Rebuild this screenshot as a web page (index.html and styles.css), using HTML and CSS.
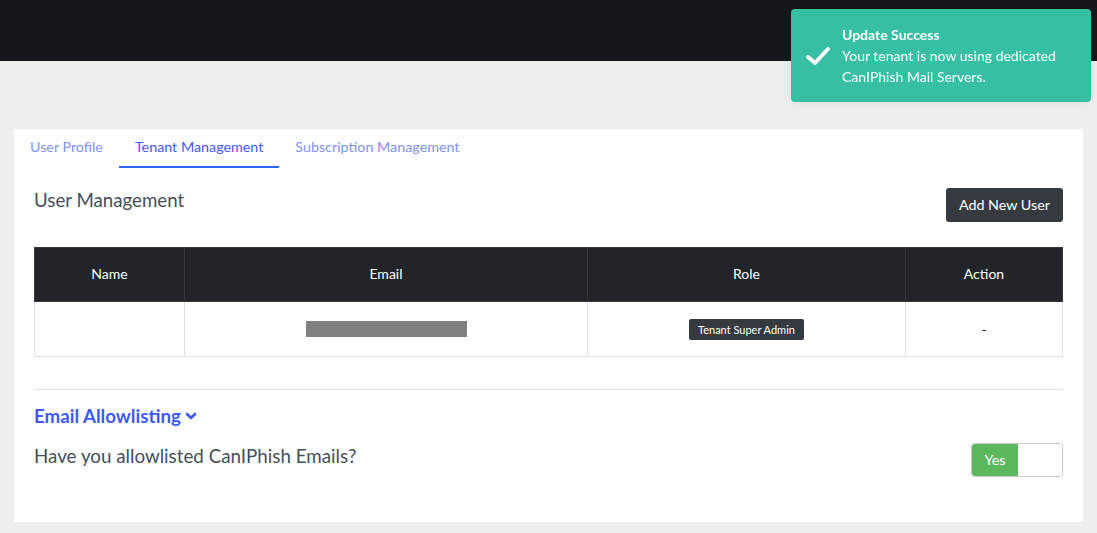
FILE: index.html
```html
<!DOCTYPE html>
<html lang="en">
<head>
    <meta charset="utf-8">
    <meta name="viewport" content="width=device-width, initial-scale=1.0">
    <title>Tenant Management</title>
<link rel="stylesheet" href="styles.css">
</head>
<body>
<div id="wrap">
    <div class="topbar"></div>
    <div id="container">
        <div class="card">
            <ul class="tabs">
                <li><a href="#none" class="tab">User Profile</a></li>
                <li><a href="#none" class="tab on">Tenant Management</a></li>
                <li><a href="#none" class="tab">Subscription Management</a></li>
            </ul>
            <div class="cardBody">
                <div class="headRow">
                    <h4 class="title">User Management</h4>
                    <a href="#none" class="btnDark">Add New User</a>
                </div>
                <table class="userTable">
                    <thead>
                        <tr>
                            <th class="colName">Name</th>
                            <th class="colEmail">Email</th>
                            <th class="colRole">Role</th>
                            <th>Action</th>
                        </tr>
                    </thead>
                    <tbody>
                        <tr>
                            <td></td>
                            <td><span class="mask"></span></td>
                            <td><span class="badge">Tenant Super Admin</span></td>
                            <td>-</td>
                        </tr>
                    </tbody>
                </table>
                <hr class="line">
                <a href="#none" class="allowTitle">Email Allowlisting
                    <svg width="12" height="12" viewBox="0 0 12 12"><path d="M2 4l4 4 4-4" fill="none" stroke="currentColor" stroke-width="2.6" stroke-linecap="round" stroke-linejoin="round"/></svg>
                </a>
                <div class="allowRow">
                    <p class="question">Have you allowlisted CanIPhish Emails?</p>
                    <div class="toggle">
                        <span class="yes">Yes</span>
                        <span class="off"></span>
                    </div>
                </div>
            </div>
        </div>
    </div>
</div>

<!-- toast -->
<div class="toast">
    <svg class="check" width="26" height="22" viewBox="0 0 26 22"><path d="M3 12l7 6L23 4" fill="none" stroke="#fff" stroke-width="4" stroke-linecap="round" stroke-linejoin="round"/></svg>
    <div class="toastTxt">
        <strong>Update Success</strong>
        <p>Your tenant is now using dedicated CanIPhish Mail Servers.</p>
    </div>
</div>
</body>
</html>
```

FILE: styles.css
```css
*{padding: 0;margin: 0;box-sizing: border-box;}
body {background-color: #eeeeee;font-family: "Lato", "Open Sans", sans-serif;color: #495057;}
a {text-decoration: none;}

.topbar {height: 61px;background-color: #16171b;}
#container {padding: 68px 14px 12px;}
.card {background-color: #fff;}

/* tabs */
.tabs {display: flex;list-style: none;}
.tab {display: block;padding: 0 16px;height: 39px;line-height: 35px;font-size: 14.3px;color: #7f92f7;border-bottom: 2px solid transparent;}
.tab.on {color: #3d5afe;border-bottom-color: #2f64ff;}

.cardBody {padding: 20px 20px 45px;}
.headRow {display: flex;justify-content: space-between;align-items: flex-start;}
.title {font-size: 18.7px;font-weight: 400;color: #454f59;line-height: 24px;}
.btnDark {display: block;height: 34px;line-height: 34px;padding: 0 13px;background-color: #343a40;color: #fff;font-size: 14.3px;border-radius: 3px;}

/* table */
.userTable {width: 100%;border-collapse: collapse;margin-top: 25px;font-size: 14px;text-align: center;}
.userTable th {height: 54px;padding-bottom: 2px;background-color: #212529;color: #fff;font-weight: 400;border: 1px solid #32383e;}
.userTable td {height: 55px;border: 1px solid #dee2e6;color: #212529;}
.colName {width: 150px;}
.colEmail {width: 403px;}
.colRole {width: 318px;}
.mask {display: inline-block;width: 161px;height: 16px;background-color: #808080;vertical-align: middle;margin-top: -3px;}
.badge {display: inline-block;padding: 4px 9px;background-color: #343a40;color: #fff;font-size: 11px;border-radius: 2px;}

.line {border: 0;border-top: 1px solid #e3e3e3;margin-top: 32px;}
.allowTitle {display: inline-flex;align-items: center;gap: 4px;margin-top: 15px;font-size: 18.7px;font-weight: 700;color: #3d5afe;}
.allowRow {display: flex;justify-content: space-between;align-items: center;margin-top: 16px;}
.question {font-size: 18.8px;color: #454f59;margin-top: -10px;}
.toggle {display: flex;width: 92px;height: 34px;border: 1px solid #c8c8c8;border-radius: 4px;overflow: hidden;}
.toggle .yes {width: 46px;background-color: #5cb85c;color: #fff;font-size: 14.3px;text-align: center;line-height: 32px;}
.toggle .off {flex: 1;background-color: #fff;}

/* toast */
.toast {position: fixed;top: 9px;left: 791px;width: 300px;height: 93px;background-color: #37bfa4;border-radius: 4px;display: flex;align-items: center;padding: 0 14px;gap: 11px;color: #fff;box-shadow: 0 0 8px rgba(0,0,0,.08);}
.toast .check {flex: none;}
.toastTxt {font-size: 14px;line-height: 21px;}
.toastTxt strong {display: block;font-weight: 700;}
```
